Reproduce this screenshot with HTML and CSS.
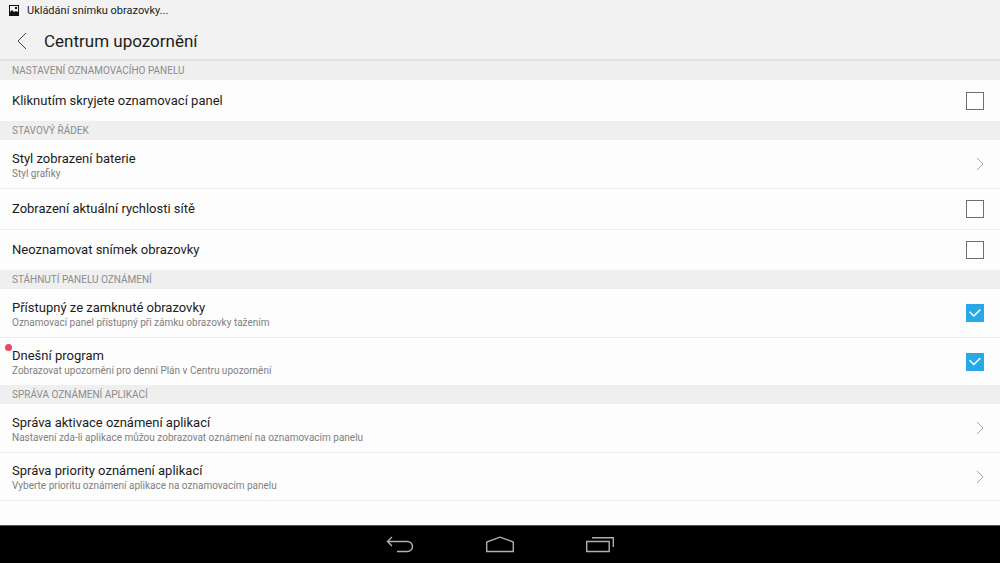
FILE: index.html
```html
<!DOCTYPE html>
<html lang="cs">
<head>
	<meta charset="UTF-8">
	<meta name="viewport" content="width=device-width, initial-scale=1.0">
	<title>Centrum upozornění</title>
	<link rel="stylesheet" href="styles.css">
</head>
<body>

	<header class="header">
		<div class="statusbar">
			<svg class="statusbar__icon" viewBox="0 0 10 11" aria-hidden="true">
				<path fill="#111" fill-rule="evenodd" d="M0 0h10v11H0zM1 1v6l2-2 2 2 2-1 2 1V1zM6 2h2v2H6z"/>
			</svg>
			<span>Ukládání snímku obrazovky...</span>
		</div>
		<div class="titlebar">
			<a class="titlebar__back" href="#" aria-label="Zpět">
				<svg viewBox="0 0 10 18"><path d="M9 1L1 9l8 8"/></svg>
			</a>
			<h1 class="titlebar__title">Centrum upozornění</h1>
		</div>
	</header>

	<main class="settings">
		<section>
			<h2 class="section-title">NASTAVENÍ OZNAMOVACÍHO PANELU</h2>
			<label class="row">
				<span class="row__title">Kliknutím skryjete oznamovací panel</span>
				<input class="checkbox" type="checkbox">
			</label>
		</section>

		<section>
			<h2 class="section-title">STAVOVÝ ŘÁDEK</h2>
			<a class="row row--double" href="#">
				<span class="row__text">
					<span class="row__title">Styl zobrazení baterie</span>
					<span class="row__summary">Styl grafiky</span>
				</span>
				<svg class="arrow" viewBox="0 0 8 14" aria-hidden="true"><path d="M1 1l6 6-6 6"/></svg>
			</a>
			<label class="row">
				<span class="row__title">Zobrazení aktuální rychlosti sítě</span>
				<input class="checkbox" type="checkbox">
			</label>
			<label class="row">
				<span class="row__title">Neoznamovat snímek obrazovky</span>
				<input class="checkbox" type="checkbox">
			</label>
		</section>

		<section>
			<h2 class="section-title">STÁHNUTÍ PANELU OZNÁMENÍ</h2>
			<label class="row row--double">
				<span class="row__text">
					<span class="row__title">Přístupný ze zamknuté obrazovky</span>
					<span class="row__summary">Oznamovací panel přístupný při zámku obrazovky tažením</span>
				</span>
				<input class="checkbox" type="checkbox" checked>
			</label>
			<label class="row row--double row--new">
				<span class="row__text">
					<span class="row__title">Dnešní program</span>
					<span class="row__summary">Zobrazovat upozornění pro denní Plán v Centru upozornění</span>
				</span>
				<input class="checkbox" type="checkbox" checked>
			</label>
		</section>

		<section>
			<h2 class="section-title">SPRÁVA OZNÁMENÍ APLIKACÍ</h2>
			<a class="row row--double" href="#">
				<span class="row__text">
					<span class="row__title">Správa aktivace oznámení aplikací</span>
					<span class="row__summary">Nastavení zda-li aplikace můžou zobrazovat oznámení na oznamovacím panelu</span>
				</span>
				<svg class="arrow" viewBox="0 0 8 14" aria-hidden="true"><path d="M1 1l6 6-6 6"/></svg>
			</a>
			<a class="row row--double" href="#">
				<span class="row__text">
					<span class="row__title">Správa priority oznámení aplikací</span>
					<span class="row__summary">Vyberte prioritu oznámení aplikace na oznamovacím panelu</span>
				</span>
				<svg class="arrow" viewBox="0 0 8 14" aria-hidden="true"><path d="M1 1l6 6-6 6"/></svg>
			</a>
		</section>
	</main>

	<nav class="navbar">
		<button class="navbar__button" aria-label="Zpět">
			<svg viewBox="0 0 28 18"><path d="M6 1L1.500 5.500 6 10M2 5.500h19.500a5 5 0 0 1 0 10H11"/></svg>
		</button>
		<button class="navbar__button" aria-label="Domů">
			<svg viewBox="0 0 28 18"><path d="M.7 15.500V6L14 1.200 27.300 6v9.500z"/></svg>
		</button>
		<button class="navbar__button" aria-label="Poslední aplikace">
			<svg viewBox="0 0 28 18"><path d="M.7 5.500h22.500v10H.7zM6 1.700h21.300V11"/></svg>
		</button>
	</nav>

</body>
</html>
```

FILE: styles.css
```css
* {
    margin: 0;
    padding: 0;
    box-sizing: border-box;
}

body {
    display: flex;
    flex-direction: column;
    min-height: 100vh;
    font-family: Roboto, "Noto Sans", sans-serif;
    color: #1c1c1c;
    background: #fdfdfd;
}

a {
    color: inherit;
    text-decoration: none;
}

svg {
    display: block;
    fill: none;
}

.header {
    background: #f2f2f2;
    border-bottom: 2px solid #dfdfdf;
}

.statusbar {
    display: flex;
    align-items: center;
    gap: 8px;
    height: 20px;
    padding: 0 9px;
    font-size: 11px;
}

.statusbar__icon {
    width: 10px;
    height: 11px;
}

.titlebar {
    display: flex;
    align-items: center;
    gap: 17px;
    height: 39px;
    padding: 2px 16px 0 17px;
}

.titlebar__back svg {
    width: 10px;
    height: 18px;
    stroke: #444;
}

.titlebar__title {
    font-size: 17px;
    font-weight: 400;
}

.settings {
    flex: 1;
}

.section-title {
    height: 19px;
    padding: 0 12px;
    font-size: 10px;
    font-weight: 400;
    line-height: 19px;
    color: #8c8c8c;
    background: #efefef;
}

.row {
    display: flex;
    align-items: center;
    justify-content: space-between;
    min-height: 41px;
    padding: 0 16px 0 12px;
    cursor: pointer;
}

.row--double {
    min-height: 48px;
}

.row + .row {
    border-top: 1px solid #ececec;
}

.settings section:last-child {
    border-bottom: 1px solid #ececec;
}

.row__text {
    display: flex;
    flex-direction: column;
    padding-top: 2px;
}

.row__title {
    font-size: 13px;
    line-height: 16px;
}

.row__summary {
    font-size: 10px;
    line-height: 13px;
    color: #808080;
}

/* red dot for a new item */
.row--new {
    position: relative;
}

.row--new::before {
    content: "";
    position: absolute;
    top: 6px;
    left: 5px;
    width: 7px;
    height: 7px;
    border-radius: 50%;
    background: #e8476b;
}

.checkbox {
    appearance: none;
    width: 18px;
    height: 18px;
    border: 1px solid #6e6e6e;
    background: #fff;
}

.checkbox:checked {
    display: grid;
    place-items: center;
    border-color: #27a9e8;
    background: #27a9e8;
}

.checkbox:checked::before {
    content: "";
    width: 12px;
    height: 8px;
    background: #fff;
    clip-path: polygon(0 40%, 9% 27%, 40% 75%, 91% 0, 100% 13%, 40% 100%);
}

.arrow {
    width: 8px;
    height: 14px;
    stroke: #a5a5a5;
}

.navbar {
    display: flex;
    align-items: center;
    justify-content: center;
    gap: 72px;
    height: 38px;
    background: #000;
    border-top: 1px solid #555;
}

.navbar__button {
    border: none;
    background: none;
    cursor: pointer;
}

.navbar__button svg {
    width: 28px;
    height: 18px;
    stroke: #b0b0b0;
    stroke-width: 1.4;
}
```
